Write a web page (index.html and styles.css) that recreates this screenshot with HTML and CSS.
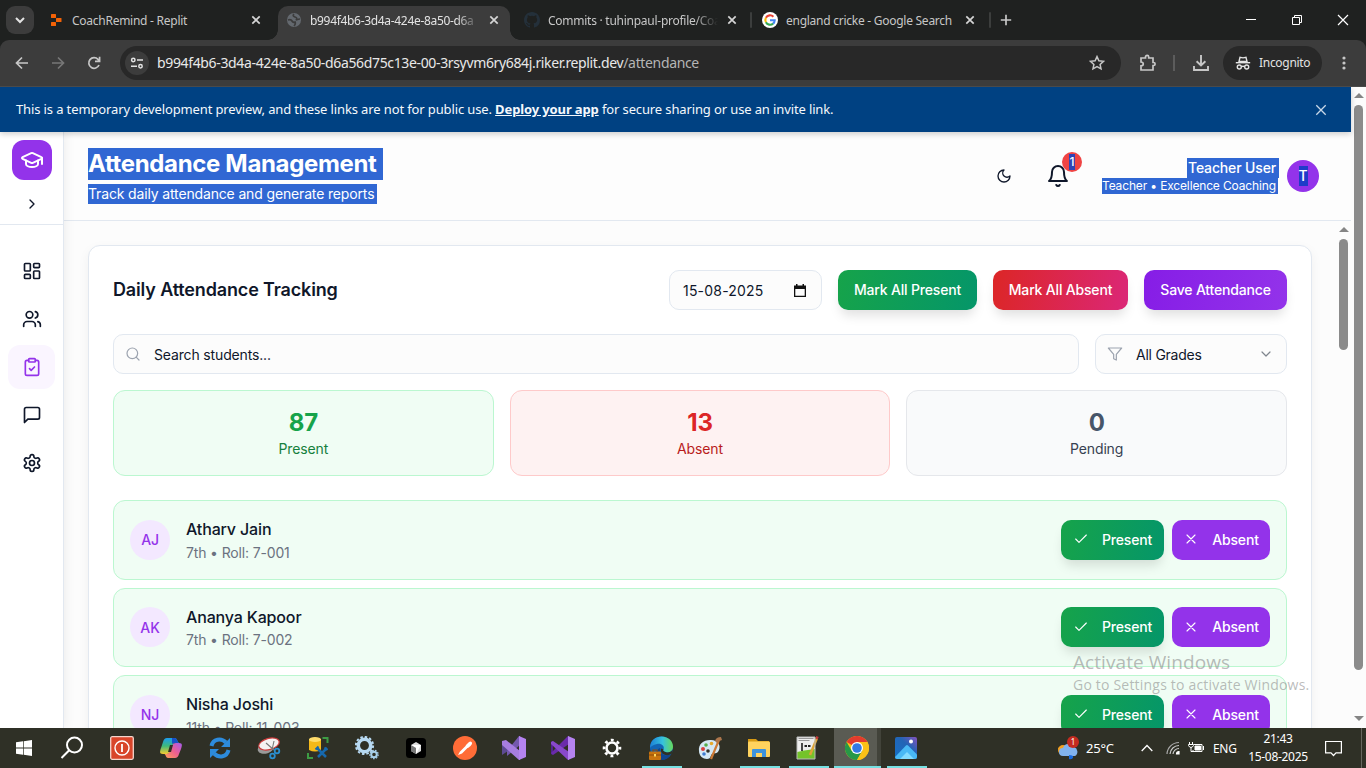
FILE: index.html
```html
<!DOCTYPE html>
<html lang="en">
<head>
<meta charset="utf-8">
<title>Attendance</title>
<link rel="stylesheet" href="styles.css">
</head>
<body>
<div class="tabs">
  <div class="tab-search"><svg width="28" height="28" viewBox="0 0 28 28" fill="none" stroke="#e3e3e3" stroke-width="2"><path d="M10 12l4 4 4-4"/></svg></div>
  <div class="tab tab-replit">
    <svg width="16" height="16" viewBox="0 0 16 16" fill="#f26207"><rect x="3" y="2" width="5" height="4" rx=".6"/><rect x="8" y="6" width="5.5" height="4" rx=".6"/><rect x="3" y="10" width="5" height="4" rx=".6"/></svg>
    <span class="tab-title t1">CoachRemind - Replit</span>
    <svg class="x" width="10" height="10" viewBox="0 0 10 10"><path d="M1.3 1.3l7.4 7.4M8.7 1.3L1.3 8.7"/></svg>
  </div>
  <div class="tab tab-active">
    <svg width="16" height="16" viewBox="0 0 16 16"><circle cx="8" cy="8" r="7" fill="#64696f"/><path d="M2 8q3-1 4 1t3 1q1 2-1 4M8 2q-2 2 1 3t1 3q3-1 4-1" fill="none" stroke="#3c3c3c" stroke-width="1.7"/></svg>
    <span class="tab-title t2">b994f4b6-3d4a-424e-8a50-d6a</span>
    <svg class="x" width="10" height="10" viewBox="0 0 10 10"><path d="M1.3 1.3l7.4 7.4M8.7 1.3L1.3 8.7"/></svg>
  </div>
  <div class="tab tab-github">
    <svg width="16" height="16" viewBox="0 0 16 16" fill="#24303a"><path fill-rule="evenodd" d="M8 0C3.58 0 0 3.58 0 8c0 3.54 2.29 6.53 5.47 7.59.4.07.55-.17.55-.38 0-.19-.01-.82-.01-1.49-2.01.37-2.53-.49-2.69-.94-.09-.23-.48-.94-.82-1.13-.28-.15-.68-.52-.01-.53.63-.01 1.08.58 1.23.82.72 1.21 1.87.87 2.33.66.07-.52.28-.87.51-1.07-1.78-.2-3.64-.89-3.64-3.95 0-.87.31-1.59.82-2.15-.08-.2-.36-1.02.08-2.12 0 0 .67-.21 2.2.82a7.4 7.4 0 0 1 4 0c1.53-1.04 2.2-.82 2.2-.82.44 1.1.16 1.92.08 2.12.51.56.82 1.27.82 2.15 0 3.07-1.87 3.75-3.65 3.95.29.25.54.73.54 1.48 0 1.07-.01 1.93-.01 2.2 0 .21.15.46.55.38A8 8 0 0 0 16 8c0-4.42-3.58-8-8-8z"/></svg>
    <span class="tab-title t3">Commits · tuhinpaul-profile/Coa</span>
    <svg class="x" width="10" height="10" viewBox="0 0 10 10"><path d="M1.3 1.3l7.4 7.4M8.7 1.3L1.3 8.7"/></svg>
  </div>
  <i class="tsep"></i>
  <div class="tab tab-google">
    <svg width="16" height="16" viewBox="0 0 16 16"><circle cx="8" cy="8" r="8" fill="#fff"/><g fill="none" stroke-width="2.1"><path d="M11.4 4.7A4.7 4.7 0 0 0 3.9 5.8" stroke="#ea4335"/><path d="M3.9 5.8a4.7 4.7 0 0 0 0 4.4" stroke="#fbbc05"/><path d="M3.9 10.2a4.7 4.7 0 0 0 7.2 1.4" stroke="#34a853"/><path d="M11.1 11.6A4.7 4.7 0 0 0 12.7 8.2H8" stroke="#4285f4"/></g></svg>
    <span class="tab-title t4">england cricke - Google Search</span>
    <svg class="x" width="10" height="10" viewBox="0 0 10 10"><path d="M1.3 1.3l7.4 7.4M8.7 1.3L1.3 8.7"/></svg>
  </div>
  <i class="tsep"></i>
  <svg class="plus" width="12" height="12" viewBox="0 0 12 12" stroke="#c7c7c7" stroke-width="1.7"><path d="M6 .8v10.4M.8 6h10.4"/></svg>
  <div class="wins">
    <svg width="12" height="12" viewBox="0 0 12 12" stroke="#fff"><path d="M1 5.500h10"/></svg>
    <svg width="12" height="12" viewBox="0 0 12 12" stroke="#fff" fill="none"><path d="M1.500 3.500h7v7h-7zM3.500 3.500v-2h7v7h-2"/></svg>
    <svg width="12" height="12" viewBox="0 0 12 12" stroke="#fff" stroke-width="1.2"><path d="M1 1l10 10M11 1L1 11"/></svg>
  </div>
</div>
<div class="toolbar">
  <div class="navs">
    <svg width="16" height="16" viewBox="0 0 16 16" fill="none" stroke="#c7c7c7" stroke-width="1.7"><path d="M14 8H3M8 2.500L2.500 8 8 13.500"/></svg>
    <svg width="16" height="16" viewBox="0 0 16 16" fill="none" stroke="#777" stroke-width="1.7"><path d="M2 8h11M8 2.500L13.500 8 8 13.500"/></svg>
    <svg width="16" height="16" viewBox="0 0 16 16" fill="none" stroke="#c7c7c7" stroke-width="1.7"><path d="M13 10a5.300 5.300 0 1 1-1-5.600L13.500 6M13.600 1.800V6.300H9"/></svg>
  </div>
  <div class="omni">
    <div class="chip"><svg width="14" height="14" viewBox="0 0 14 14" fill="none" stroke="#e3e3e3" stroke-width="1.500"><circle cx="3.300" cy="4" r="1.700"/><path d="M7 4h6M1 10.200h6"/><circle cx="10.500" cy="10.200" r="1.700"/></svg></div>
    <span class="url">b994f4b6-3d4a-424e-8a50-d6a56d75c13e-00-3rsyvm6ry684j.riker.replit.dev<em>/attendance</em></span>
    <svg class="star" width="16" height="16" viewBox="0 0 16 16" fill="none" stroke="#c7c7c7" stroke-width="1.500"><path d="M8 1.600l1.900 4.200 4.600.5-3.400 3.100.9 4.500L8 11.600l-4 2.300.9-4.500L1.500 6.300l4.600-.5z"/></svg>
  </div>
  <svg class="ext" width="18" height="18" viewBox="0 0 18 18" fill="none" stroke="#c7c7c7" stroke-width="1.700"><path d="M2 4h4.500V3a1.600 1.600 0 0 1 3.200 0v1H14v4.500h.6a1.500 1.500 0 0 1 0 3H14V16H2v-4.200c3 0 3-3.800 0-3.800z"/></svg>
  <i class="bsep"></i>
  <svg class="dl" width="18" height="18" viewBox="0 0 18 18" fill="none" stroke="#c7c7c7" stroke-width="1.900"><path d="M9 1v10M4.600 7.200L9 11.500l4.400-4.300M2 12v4h14v-4"/></svg>
  <div class="incog">
    <svg width="16" height="16" viewBox="0 0 16 16" fill="none" stroke="#e3e3e3" stroke-width="1.400"><path d="M4 6.500l1-4.200 3 .6 3-.6 1 4.200z"/><path d="M.8 7.700h14.400"/><circle cx="4.300" cy="12" r="2"/><circle cx="11.700" cy="12" r="2"/><path d="M6.300 11.700q1.700-1 3.400 0"/></svg>
    <span>Incognito</span>
  </div>
  <svg class="dots" width="4" height="16" viewBox="0 0 4 16" fill="#c7c7c7"><circle cx="2" cy="3" r="1.600"/><circle cx="2" cy="8" r="1.600"/><circle cx="2" cy="13" r="1.600"/></svg>
</div>
<div class="view">
  <div class="page">
    <div class="banner"><span class="btext">This is a temporary development preview, and these links are not for public use. <b>Deploy your app</b> for secure sharing or use an invite link.</span>
      <svg width="12" height="12" viewBox="0 0 12 12" stroke="#c9d8e8" stroke-width="1.300"><path d="M1.300 1.300l9.400 9.400M10.700 1.300L1.300 10.700"/></svg></div>
    <div class="app">
      <aside class="side">
        <div class="brand">
          <div class="logo"><svg class="lu" width="24" height="24" viewBox="0 0 24 24"><path d="M21.420 10.922a1 1 0 0 0-.019-1.838L12.830 5.180a2 2 0 0 0-1.660 0L2.600 9.080a1 1 0 0 0 0 1.832l8.570 3.908a2 2 0 0 0 1.660 0z"/><path d="M22 10v6"/><path d="M6 12.500V16a6 3 0 0 0 12 0v-3.500"/></svg></div>
          <svg class="lu chev" width="16" height="16" viewBox="0 0 24 24"><path d="m9 18 6-6-6-6"/></svg>
        </div>
        <nav>
          <a><svg class="lu" width="20" height="20" viewBox="0 0 24 24"><rect width="7" height="9" x="3" y="3" rx="1"/><rect width="7" height="5" x="14" y="3" rx="1"/><rect width="7" height="9" x="14" y="12" rx="1"/><rect width="7" height="5" x="3" y="16" rx="1"/></svg></a>
          <a><svg class="lu" width="20" height="20" viewBox="0 0 24 24"><path d="M16 21v-2a4 4 0 0 0-4-4H6a4 4 0 0 0-4 4v2"/><circle cx="9" cy="7" r="4"/><path d="M22 21v-2a4 4 0 0 0-3-3.870M16 3.130a4 4 0 0 1 0 7.750"/></svg></a>
          <a class="on"><svg class="lu" width="20" height="20" viewBox="0 0 24 24"><rect width="8" height="4" x="8" y="2" rx="1"/><path d="M16 4h2a2 2 0 0 1 2 2v14a2 2 0 0 1-2 2H6a2 2 0 0 1-2-2V6a2 2 0 0 1 2-2h2M9 14l2 2 4-4"/></svg></a>
          <a><svg class="lu" width="20" height="20" viewBox="0 0 24 24"><path d="M21 15a2 2 0 0 1-2 2H7l-4 4V5a2 2 0 0 1 2-2h14a2 2 0 0 1 2 2z"/></svg></a>
          <a><svg class="lu" width="20" height="20" viewBox="0 0 24 24"><path d="M12.220 2h-.44a2 2 0 0 0-2 2v.18a2 2 0 0 1-1 1.730l-.43.25a2 2 0 0 1-2 0l-.15-.08a2 2 0 0 0-2.730.73l-.22.38a2 2 0 0 0 .73 2.730l.15.1a2 2 0 0 1 1 1.720v.51a2 2 0 0 1-1 1.740l-.15.090a2 2 0 0 0-.73 2.730l.22.380a2 2 0 0 0 2.730.730l.15-.080a2 2 0 0 1 2 0l.43.250a2 2 0 0 1 1 1.730V20a2 2 0 0 0 2 2h.44a2 2 0 0 0 2-2v-.18a2 2 0 0 1 1-1.730l.43-.25a2 2 0 0 1 2 0l.15.080a2 2 0 0 0 2.730-.730l.22-.390a2 2 0 0 0-.73-2.730l-.15-.080a2 2 0 0 1-1-1.740v-.5a2 2 0 0 1 1-1.740l.15-.090a2 2 0 0 0 .73-2.730l-.22-.380a2 2 0 0 0-2.730-.730l-.15.080a2 2 0 0 1-2 0l-.43-.250a2 2 0 0 1-1-1.730V4a2 2 0 0 0-2-2z"/><circle cx="12" cy="12" r="3"/></svg></a>
        </nav>
      </aside>
      <main>
        <header>
          <div class="heads"><h1>Attendance Management</h1><p>Track daily attendance and generate reports</p></div>
          <svg class="lu moon" width="16" height="16" viewBox="0 0 24 24"><path d="M12 3a6 6 0 0 0 9 9 9 9 0 1 1-9-9Z"/></svg>
          <div class="bell"><svg class="lu" width="24" height="24" viewBox="0 0 24 24"><path d="M6 8a6 6 0 0 1 12 0c0 7 3 9 3 9H3s3-2 3-9M10.300 21a1.940 1.940 0 0 0 3.400 0"/></svg><span class="badge"><i>1</i></span></div>
          <div class="user"><span class="un">Teacher User</span><span class="ur">Teacher • Excellence Coaching</span></div>
          <div class="ava"><i>T</i></div>
        </header>
        <div class="scroll">
          <div class="content">
            <section class="card">
              <div class="bar">
                <h2>Daily Attendance Tracking</h2>
                <div class="date"><span>15-08-2025</span><svg width="12" height="13" viewBox="0 0 12 13"><path d="M0 1.500h2V0h1.500v1.500h5V0H10v1.500h2V13H0zM1.300 5v6.700h9.400V5z" fill="#111" fill-rule="evenodd"/></svg></div>
                <button class="btn g w1">Mark All Present</button>
                <button class="btn r w2">Mark All Absent</button>
                <button class="btn v w3">Save Attendance</button>
              </div>
              <div class="filters">
                <div class="field search"><svg class="lu" width="16" height="16" viewBox="0 0 24 24"><circle cx="11" cy="11" r="8"/><path d="m21 21-4.300-4.300"/></svg><span>Search students...</span></div>
                <div class="field grade"><svg class="lu" width="16" height="16" viewBox="0 0 24 24"><path d="M22 3H2l8 9.460V19l4 2v-8.540z"/></svg><span>All Grades</span><svg class="lu dn" width="16" height="16" viewBox="0 0 24 24"><path d="m6 9 6 6 6-6"/></svg></div>
              </div>
              <div class="stats">
                <div class="stat sg"><strong>87</strong><span>Present</span></div>
                <div class="stat sr"><strong>13</strong><span>Absent</span></div>
                <div class="stat ss"><strong>0</strong><span>Pending</span></div>
              </div>
              <div class="rows">
                <div class="row"><div class="ini">AJ</div><div class="who"><b>Atharv Jain</b><span>7th • Roll: 7-001</span></div>
                  <button class="btn g pr"><svg class="lu" width="16" height="16" viewBox="0 0 24 24"><path d="M20 6 9 17l-5-5"/></svg>Present</button><button class="btn ab"><svg class="lu" width="16" height="16" viewBox="0 0 24 24"><path d="M18 6 6 18M6 6l12 12"/></svg>Absent</button></div>
                <div class="row"><div class="ini">AK</div><div class="who"><b>Ananya Kapoor</b><span>7th • Roll: 7-002</span></div>
                  <button class="btn g pr"><svg class="lu" width="16" height="16" viewBox="0 0 24 24"><path d="M20 6 9 17l-5-5"/></svg>Present</button><button class="btn ab"><svg class="lu" width="16" height="16" viewBox="0 0 24 24"><path d="M18 6 6 18M6 6l12 12"/></svg>Absent</button></div>
                <div class="row"><div class="ini">NJ</div><div class="who"><b>Nisha Joshi</b><span>11th • Roll: 11-003</span></div>
                  <button class="btn g pr"><svg class="lu" width="16" height="16" viewBox="0 0 24 24"><path d="M20 6 9 17l-5-5"/></svg>Present</button><button class="btn ab"><svg class="lu" width="16" height="16" viewBox="0 0 24 24"><path d="M18 6 6 18M6 6l12 12"/></svg>Absent</button></div>
              </div>
            </section>
          </div>
          <div class="sb"><i class="up"></i><i class="thumb t-in"></i></div>
        </div>
      </main>
    </div>
  </div>
  <div class="sb"><i class="up"></i><i class="thumb t-out"></i><i class="down"></i></div>
</div>
<div class="watermark"><div class="w-a">Activate Windows</div><div class="w-b">Go to Settings to activate Windows.</div></div>
<footer class="taskbar">
  <div class="apps">
    <div class="slot first"><svg width="16" height="16" viewBox="0 0 16 16" fill="#fff"><path d="M0 2.300L7 1.300v6.300H0zM7.700 1.200L16 0v7.600H7.700zM0 8.400h7v6.300l-7-1zM7.700 8.400H16V16l-8.300-1.200z"/></svg></div>
    <div class="slot find"><svg width="24" height="24" viewBox="0 0 24 24" fill="none" stroke="#fff" stroke-width="2"><circle cx="14.500" cy="9" r="7.500"/><path d="M9.200 14.300L1.500 22"/></svg></div>
    <div class="slot"><svg width="24" height="24" viewBox="0 0 24 24"><rect x=".7" y=".7" width="22.600" height="22.600" rx="1.500" fill="#d8452a" stroke="#f5d5cc" stroke-width="1.300"/><circle cx="12" cy="12" r="7" fill="none" stroke="#fff" stroke-width="1.400"/><path d="M12 8v8" stroke="#fff" stroke-width="1.800"/></svg></div>
    <div class="slot"><svg width="24" height="24" viewBox="0 0 24 24"><defs><linearGradient id="ca" x1="0" y1="0" x2="0" y2="1"><stop stop-color="#1c9cf0"/><stop offset=".5" stop-color="#3eba7a"/><stop offset="1" stop-color="#f8cb30"/></linearGradient><linearGradient id="cb" x1="1" y1="0" x2="0" y2="1"><stop stop-color="#a45cf0"/><stop offset=".5" stop-color="#ee5f90"/><stop offset="1" stop-color="#ffa055"/></linearGradient></defs><path d="M8 2h8c2 0 2.500 4 4 5h-4q-2 0-3 3l-2 6q-.5 2-3 2H4c-4 0-3-3-2-6l2-6q1-4 4-4z" fill="url(#ca)"/><path d="M13 2h3c2 0 2.500 4 4 5h-4q-2 0-3 1z" fill="#1850c8"/><path d="M16 22H9c-2 0-2-3-3.500-4H8q2 0 3-3l2-5q1-3 4-3h3c4 0 3 3 2 6l-2 5q-1 4-4 4z" fill="url(#cb)"/><path d="M11 9h3l-2 7H9z" fill="#2f3026"/></svg></div>
    <div class="slot"><svg width="24" height="24" viewBox="0 0 24 24" fill="none" stroke="#2d8bdc" stroke-width="4"><path d="M3.500 10C5 3 13 1.500 18 6.500M20.500 14C19 21 11 22.500 6 17.500"/><path d="M22 2v9h-9zM2 22v-9h9z" fill="#2d8bdc" stroke="none"/></svg></div>
    <div class="slot"><svg width="24" height="24" viewBox="0 0 24 24"><ellipse cx="9" cy="12" rx="8.500" ry="5.500" transform="rotate(-18 9 12)" fill="#999"/><ellipse cx="12" cy="8" rx="10.500" ry="5.600" transform="rotate(-15 12 8)" fill="#f6f2f2" stroke="#cc3a3a" stroke-width="1.200"/><path d="M9 7l8 7M17 5l-2 9" stroke="#777" stroke-width="1.100"/><g fill="none" stroke="#2a8ed0" stroke-width="1.800"><circle cx="20" cy="15" r="2.300"/><circle cx="15.500" cy="20" r="2.300"/></g></svg></div>
    <div class="slot"><svg width="24" height="24" viewBox="0 0 24 24"><path d="M3 3v11q6 3 12 0V3z" fill="#f5b919"/><ellipse cx="9" cy="3.500" rx="6" ry="2.500" fill="#ffdc6b"/><path d="M16.500 2h5v5M2 17v5h5" fill="none" stroke="#3d9b44" stroke-width="2"/><path d="M11 12l9 9M21 12l-9 9" stroke="#1769ae" stroke-width="2.500"/><path d="M9.500 13.500l3-3M18.500 11.500l3 2.500" stroke="#1769ae" stroke-width="2"/></svg></div>
    <div class="slot"><svg width="24" height="24" viewBox="0 0 24 24" fill="none"><circle cx="9.500" cy="9.500" r="6.200" stroke="#b7d9f2" stroke-width="3.500"/><circle cx="9.500" cy="9.500" r="8.600" stroke="#b7d9f2" stroke-width="2" stroke-dasharray="2.500 2"/><circle cx="19" cy="18.500" r="2.800" stroke="#a7cfe9" stroke-width="2"/><circle cx="19" cy="18.500" r="4.200" stroke="#a7cfe9" stroke-width="1.200" stroke-dasharray="1.600 1.300"/></svg></div>
    <div class="slot"><svg width="20" height="20" viewBox="0 0 20 20"><rect width="20" height="20" rx="3.500" fill="#000"/><path d="M10 4l5 3v6l-5 3-5-3V7z" fill="#ddd"/><path d="M5 7h10l-5 9v-6z" fill="#fff"/><path d="M5 7l5 3v6l-5-3z" fill="#777"/></svg></div>
    <div class="slot"><svg width="24" height="24" viewBox="0 0 24 24"><circle cx="12" cy="12" r="12" fill="#ff6c37"/><path d="M5 19l2-3.500 6-6 2 2-6 6zM12.500 9.500l2-2q2.500-3 4-1.500t-1 4l-2.500 2z" fill="#fff"/></svg></div>
    <div class="slot"><svg width="24" height="24" viewBox="0 0 24 24"><path d="M0 5l6 5v5l-6 4z" fill="#5d4a92"/><path d="M5 15L17 0h1v9L5 20z" fill="#7458ad"/><path d="M0 5l4-1 14 11v9h-1L0 9z" fill="#a77de0"/><path d="M17 0l7 3v18l-7 3z" fill="#b583f0"/></svg></div>
    <div class="slot"><svg width="24" height="24" viewBox="0 0 24 24"><path d="M0 6l2-1v14l-2-1z" fill="#52218f"/><path d="M2 19L18 8V0h-1L0 17z" fill="#6a2bab"/><path d="M0 6l2-1 16 11v8h-1L0 8z" fill="#8848cb"/><path d="M17 0l7 3v18l-7 3z" fill="#b583f0"/></svg></div>
    <div class="slot"><svg width="20" height="20" viewBox="0 0 20 20" fill="none" stroke="#fff"><circle cx="10" cy="10" r="5.500" stroke-width="2.600"/><circle cx="10" cy="10" r="8" stroke-width="2.600" stroke-dasharray="2.900 3.383" stroke-dashoffset="1.450"/></svg></div>
    <div class="slot run"><svg width="24" height="24" viewBox="0 0 24 24"><defs><linearGradient id="eg" x1="0" x2="1"><stop stop-color="#1c7fd8"/><stop offset=".55" stop-color="#36c2dd"/><stop offset="1" stop-color="#67d95a"/></linearGradient></defs><circle cx="12.500" cy="12" r="11.500" fill="#1264b5"/><path d="M1 12C1 4 7 .5 12.500.5 20 .5 24 6 24 10.500c0 4-3 6-6 6s-5-1.500-3.500-3C16 10 12 7 8 8s-6 2-7 4z" fill="url(#eg)"/><path d="M11 12q-1 5 4 7 4 1 7-1-3 6-9 6-5-2-5-7 0-4 3-5z" fill="#10468f"/><path d="M14.500 13.500q-1.500 1.500 3.500 3 4 0 6-3l-1 4q-4 3-8 1-4-2-3-6z" fill="#2f3026"/><rect x="0" y="15.500" width="12" height="8.500" rx="1" fill="#c8740f"/><path d="M4 15.500v-1.500h4v1.500" fill="none" stroke="#8b4a0a" stroke-width="1.200"/><path d="M0 19h12" stroke="#8b4a0a"/><rect x="5" y="18" width="2" height="2.500" fill="#ffd75a"/></svg></div>
    <div class="slot"><svg width="24" height="24" viewBox="0 0 24 24"><path d="M1 15C0 8 6 3.500 13 4s10 5 8 10-5 2-7 4-1 5-5 5-8-3-8-8z" fill="#d5e8f5"/><circle cx="5" cy="13" r="2" fill="#d84040"/><circle cx="8" cy="9" r="1.800" fill="#57ad4c"/><circle cx="13.500" cy="7.500" r="1.800" fill="#e6a92c"/><circle cx="6" cy="18" r="1.800" fill="#417dd2"/><circle cx="10" cy="15" r="1.800" fill="#30302a"/><path d="M21 4l-8 19" stroke="#cc7a37" stroke-width="2.200"/><path d="M17 5q1-4 6-4l1 3q-4 1-5 3z" fill="#ad764c"/></svg></div>
    <div class="slot run"><svg width="24" height="24" viewBox="0 0 24 24"><path d="M1 3h8l2 2h11v3H1z" fill="#d79a13"/><rect x="1" y="5.500" width="22" height="15.500" rx="1" fill="#ffd35e"/><path d="M5 21v-7q0-1 1-1h12q1 0 1 1v7h-4v-4H9v4z" fill="#3d93dc"/></svg></div>
    <div class="slot run"><svg width="24" height="24" viewBox="0 0 24 24"><path d="M1 1h18v22H1z" fill="#eee"/><path d="M1 16q9-2 18-3v10H1z" fill="#74c32a"/><path d="M2.500 2.500h15M2.500 4.500h11" stroke="#999"/><path d="M6 7v8" stroke="#111" stroke-width="1.500"/><path d="M8.500 10h2.500M12 10h2.500" stroke="#222" stroke-width="2"/><path d="M21 2l-7 17" stroke="#dea638" stroke-width="2.500"/><path d="M20.500 3l1-2.500" stroke="#c43b3b" stroke-width="2.500"/><path d="M1 1h18v22H1z" fill="none" stroke="#bbb"/></svg></div>
    <div class="slot run cur"><svg width="24" height="24" viewBox="0 0 24 24"><circle cx="12" cy="12" r="12" fill="#fbc116"/><path d="M12 12L1.600 6A12 12 0 0 1 22.400 6H12z" fill="#e33b2e"/><path d="M1.600 6A12 12 0 0 0 12 24l5.200-9H6.800z" fill="#279847"/><path d="M12 6h10.400A12 12 0 0 1 12 24l5.200-9z" fill="#fbc116"/><circle cx="12" cy="12" r="6" fill="#fff"/><circle cx="12" cy="12" r="4.800" fill="#3379e4"/></svg></div>
    <div class="slot run"><svg width="22" height="22" viewBox="0 0 22 22"><defs><linearGradient id="ph" x1="0" y1="1" x2="1" y2="0"><stop stop-color="#1470c6"/><stop offset=".6" stop-color="#2364b5"/><stop offset="1" stop-color="#8652bd"/></linearGradient></defs><rect width="22" height="22" rx="2" fill="url(#ph)"/><path d="M0 20L11 8.500q1-1 2 0l9 9V20q0 2-2 2H2q-2 0-2-2z" fill="#49b9f5"/><path d="M5 22l7-7 7 7z" fill="#83dcff"/><circle cx="16" cy="4.500" r="2" fill="#fff"/></svg></div>
  </div>
  <div class="tray">
    <svg class="wx" width="24" height="24" viewBox="0 0 24 24"><path d="M1 12l4-2 2 5-4 2z" fill="#f2a020"/><circle cx="6" cy="14" r="5" fill="#f2a020"/><path d="M6 20a4 4 0 0 1 0-8 6 6 0 0 1 11-1 5 5 0 0 1 1 9z" fill="#82b3ee"/><path d="M12 19q5 0 4 3-2 2-4 1z" fill="#1769e0"/><circle cx="16" cy="6" r="6" fill="#c52b20"/><text x="16" y="9" font-size="8" fill="#fff" text-anchor="middle">1</text></svg>
    <span class="temp">25°C</span>
    <svg class="tc" width="12" height="8" viewBox="0 0 12 8" fill="none" stroke="#fff" stroke-width="1.300"><path d="M.7 7L6 1.500 11.300 7"/></svg>
    <svg class="wifi" width="14" height="14" viewBox="0 0 14 14" fill="none" stroke="#aaa" stroke-width="1.200"><path d="M1 13A12 12 0 0 1 13 1.500"/><path d="M4 13a9 9 0 0 1 9-8.500M7 13a6 6 0 0 1 6-5.500" stroke="#ccc"/><path d="M10.500 13a2.500 2.500 0 0 1 2.500-2.500v2.500z" fill="#fff" stroke="#fff"/></svg>
    <svg class="bat" width="16" height="12" viewBox="0 0 16 12" fill="none" stroke="#fff"><path d="M6 2.500h8v7h-9V8"/><path d="M7 4h5.500v4H7z" fill="#fff"/><path d="M15.500 4v4M1.500 0v2M4.500 0v2M.5 2.500h5v1q-1 2-2.500 2T.5 3.500zM3 5.500v4h2"/></svg>
    <span class="eng">ENG</span>
    <div class="clock"><span>21:43</span><span class="cd">15-08-2025</span></div>
    <svg class="note" width="17" height="17" viewBox="0 0 17 17" fill="none" stroke="#fff" stroke-width="1.200"><path d="M.6 1.500h15.800v11.300h-5.400L8.500 15.500 6 12.800H.6z"/></svg>
    <i class="show"></i>
  </div>
</footer>
</body>
</html>
```
FILE: styles.css
```css
*{box-sizing:border-box}
body{margin:0;width:1366px;height:768px;overflow:hidden;display:flex;flex-direction:column;font-family:Inter,"Liberation Sans",sans-serif;color:#0f172a;background:#1f2120;position:relative}
svg{display:block;flex:none}
i,em{font-style:normal}
.lu{fill:none;stroke:currentColor;stroke-width:2;stroke-linecap:round;stroke-linejoin:round}
.tabs{height:40px;display:flex;align-items:center;padding-left:6px;flex:none;font-family:"Noto Sans","Open Sans",sans-serif;font-size:12px;color:#c7c7c7}
.tab-search{width:28px;height:28px;border-radius:9px;background:#3c3c3c}
.tab{display:flex;align-items:center;height:34px;flex:none;margin-top:6px;padding-bottom:6px}
.tab-title{white-space:nowrap;margin-left:8px;line-height:18px;margin-top:1px;letter-spacing:-.26px}
.tab .x{margin-left:auto;stroke:#d5d5d5;stroke-width:1.7}
.tab-replit{width:244px;padding-left:14px;padding-right:17px}
.tab-active{width:232px;background:#3c3c3c;border-radius:10px 10px 0 0;padding-left:8px;padding-right:11px;color:#e3e3e3;position:relative}
.tab-active::before,.tab-active::after{content:"";position:absolute;bottom:0;width:10px;height:10px}
.tab-active::before{left:-10px;background:radial-gradient(circle at 0 0,transparent 9.5px,#3c3c3c 10px)}
.tab-active::after{right:-10px;background:radial-gradient(circle at 100% 0,transparent 9.5px,#3c3c3c 10px)}
.tab-github{width:240px;padding-left:14px;padding-right:13px}
.tab-google{width:237px;padding-left:10px;padding-right:14px}
.t2,.t3{width:170px;-webkit-mask:linear-gradient(90deg,#000 86%,transparent 100%);mask:linear-gradient(90deg,#000 86%,transparent 100%)}
.t2{letter-spacing:-.32px}
.tsep{width:2px;height:16px;background:#3c3e3d;border-radius:1px;flex:none}
.plus{margin-left:9px}
.wins{display:flex;gap:34px;margin-left:auto;margin-right:17px}
.toolbar{height:47px;background:#3c3c3c;border-radius:9px 9px 0 0;border-bottom:1px solid #4a4a4a;display:flex;align-items:center;flex:none;font-family:"Noto Sans","Open Sans",sans-serif;color:#e3e3e3}
.navs{display:flex;gap:20px;padding-left:14px}
.omni{margin-left:18px;width:1001px;height:34px;border-radius:17px;background:#282828;display:flex;align-items:center;padding:0 16px 0 5px}
.chip{width:24px;height:24px;border-radius:50%;background:#3c3c3c;display:flex;align-items:center;justify-content:center}
.url{margin-left:8px;font-size:14px;letter-spacing:-.35px;color:#e8e8e8;white-space:nowrap;padding-bottom:1px}
.url em{color:#b5b5b5}
.star{margin-left:auto}
.ext{margin-left:18px}
.bsep{width:2px;height:16px;background:#5c5c5c;margin-left:16px}
.dl{margin-left:17px}
.incog{margin-left:13px;width:99px;height:34px;border-radius:17px;background:#282828;display:flex;align-items:center;padding-left:12px;gap:8px;font-size:12px;letter-spacing:-.35px}
.incog span{padding-bottom:1px;letter-spacing:-.3px}
.dots{margin-left:20px}
.view{height:641px;display:flex;flex:none;overflow:hidden;background:#fcfcfc}
.page{width:1351px;display:flex;flex-direction:column}
.banner{height:45px;background:#004182;color:#f4f8fc;display:flex;align-items:center;justify-content:space-between;padding:0 24px 0 16px;font:13px "Noto Sans","Open Sans",sans-serif;box-shadow:0 2px 6px rgba(0,0,0,.2);position:relative;z-index:3;flex:none}
.btext{white-space:nowrap;letter-spacing:-.125px;padding-bottom:1px}
.banner b{text-decoration:underline;font-weight:700}
.app{display:flex;height:596px}
.side{width:64px;flex:none;border-right:1px solid #e2e8f0;background:#fff;box-shadow:2px 0 10px rgba(0,0,0,.06);z-index:2}
.brand{height:93px;border-bottom:1px solid #e2e8f0;padding-top:8px;display:flex;flex-direction:column;align-items:center;gap:16px}
.logo{width:40px;height:40px;border-radius:12px;background:#9333ea;color:#fff;display:flex;align-items:center;justify-content:center}
nav{padding:24px 8px;display:flex;flex-direction:column;gap:4px}
nav a{height:44px;border-radius:12px;display:flex;align-items:center;justify-content:center}
nav a.on{background:#faf5ff;color:#9333ea}
main{flex:1;min-width:0;letter-spacing:-.15px}
header{height:89px;border-bottom:1px solid #e2e8f0;display:flex;align-items:center;padding:0 32px 0 24px;background:#fdfdfd;box-shadow:0 1px 3px rgba(0,0,0,.03)}
.heads{display:flex;flex-direction:column;align-items:flex-start;gap:4px;margin-right:auto}
h1,.heads p{margin:0;background:#3067d3;color:#fff;white-space:nowrap}
h1{font-size:24px;line-height:32px;font-weight:700;letter-spacing:-.34px;width:295px}
.heads p{font-size:14px;line-height:20px;width:289px}
.moon{margin-right:34px}
.bell{position:relative;margin-right:32px}
.badge{position:absolute;left:16px;top:-12px;width:20px;height:20px;border-radius:50%;background:#ef4444;color:#fff;font-size:12px;line-height:16px;font-weight:500;display:flex;align-items:center;justify-content:center}
.badge i{background:#2f44b6;padding:0 1px;height:16px}
.user{display:flex;flex-direction:column;align-items:flex-end;color:#fff;margin-right:8px;white-space:nowrap}
.un,.ur{background:#3067d3}
.un{font-size:14px;font-weight:500;line-height:20px;width:92px;padding-left:1px}
.ur{font-size:12px;line-height:16px;width:176px;margin-right:1px}
.ava{width:32px;height:32px;border-radius:50%;background:#9333ea;color:#fff;display:flex;align-items:center;justify-content:center;font-size:14px;font-weight:500}
.ava i{background:#1f3cc9;line-height:20px}
.scroll{display:flex;height:507px;overflow:hidden}
.content{flex:1;padding:24px 24px 0;min-width:0;background:#fcfcfc}
.card{background:#fff;border:1px solid #e2e8f0;border-radius:12px;padding:24px;height:600px;box-shadow:0 4px 12px rgba(0,0,0,.05)}
.bar{display:flex;height:40px;align-items:center;gap:16px}
h2{margin:0 auto 0 0;font-size:18px;line-height:28px;font-weight:600;white-space:nowrap}
.date{width:153px;height:40px;border:1px solid #e2e8f0;border-radius:10px;background:#fcfcfc;display:flex;align-items:center;justify-content:space-between;padding:0 15px 0 13px;font-size:14px;letter-spacing:.2px}
.btn{border:0;border-radius:10px;height:40px;color:#fff;font:500 14px Inter,sans-serif;letter-spacing:-.18px;padding:0 0 1px;display:flex;align-items:center;justify-content:center;flex:none;white-space:nowrap}
.g{background:linear-gradient(100deg,#16a34a,#059669);box-shadow:0 8px 12px -3px rgba(0,0,0,.13)}
.r{background:linear-gradient(100deg,#dc2626,#db2777);box-shadow:0 8px 12px -3px rgba(0,0,0,.13)}
.v{background:linear-gradient(100deg,#861de6,#9333ea);box-shadow:0 8px 12px -3px rgba(0,0,0,.13)}
.w1{width:139px}.w2{width:135px}.w3{width:143px}
.filters{margin-top:24px;display:flex;gap:16px}
.field{height:40px;border:1px solid #e2e8f0;border-radius:10px;background:#fcfcfc;display:flex;align-items:center;font-size:14px;padding:0 12px 0 11px;gap:13px}
.field svg{color:#9ca3af;stroke-width:1.8}
.search{flex:1}
.grade{width:192px;letter-spacing:-.25px}
.field .dn{margin-left:auto;color:#7f858e}
.stats{display:grid;grid-template-columns:repeat(3,1fr);gap:16px;margin-top:16px}
.stat{height:86px;border:1px solid;border-radius:12px;padding-top:16px;display:flex;flex-direction:column;align-items:center}
.stat strong{font-size:24px;line-height:32px;font-weight:700}
.stat span{font-size:14px;line-height:20px}
.sg{background:#f0fdf4;border-color:#bbf7d0;color:#16a34a}.sg span{color:#15803d}
.sr{background:#fef2f2;border-color:#fecaca;color:#dc2626}.sr span{color:#b91c1c}
.ss{background:#f9fafb;border-color:#e5e7eb;color:#475569}.ss span{color:#374151}
.rows{margin-top:24px;display:flex;flex-direction:column;gap:8px}
.row{height:79.5px;background:#f0fdf4;border:1px solid #bbf7d0;border-radius:12px;padding:0 16px;display:flex;align-items:center}
.ini{width:40px;height:40px;border-radius:50%;background:#f3e8ff;color:#9333ea;font-size:14px;font-weight:500;display:flex;align-items:center;justify-content:center;flex:none}
.who{margin:0 auto 0 16px;display:flex;flex-direction:column;gap:1.5px}
.who b{font-weight:500;font-size:16px;line-height:24px}
.who span{font-size:14px;line-height:20px;color:#6b7280}
.row .btn svg{margin-right:13px;stroke-width:1.7}
.pr{width:103px;margin-right:8px}
.ab{width:98px;background:#9333ea}
.sb{width:15px;flex:none;background:#fcfcfc;display:flex;flex-direction:column;align-items:center;padding-top:6px}
.up,.down{border:5px solid transparent;width:0;height:0}
.up{border-top:0;border-bottom:5px solid #858585}
.down{border-bottom:0;border-top:5px solid #858585;margin-top:46px}
.thumb{width:9px;border-radius:5px;background:#8b8b8b;margin-top:7px;flex:none}
.t-in{height:111px}.t-out{height:565px}
.watermark{position:absolute;left:1073px;top:650px;color:rgba(130,130,130,.55);font-family:"Open Sans","Noto Sans",sans-serif;white-space:nowrap;z-index:5}
.w-a{font-size:19px;line-height:25px;letter-spacing:.07px}
.w-b{font-size:14px;line-height:20px;letter-spacing:.2px}
.taskbar{height:40px;flex:none;background:#2f3026;display:flex;color:#fff;font-family:"Noto Sans","Open Sans",sans-serif;font-size:12px}
.apps{display:flex;width:932px}
.slot{width:49.03px;height:40px;flex:none;display:flex;align-items:center;justify-content:center;position:relative}
.slot.first{width:48px}
.slot.find{width:49.6px;padding-right:2px}
.run::after{content:"";position:absolute;left:5px;width:40px;bottom:0;height:2px;background:#76e0e2}
.cur{background:linear-gradient(90deg,transparent 1px,#5a5b53 1px 44px,#42433a 44px 48px,transparent 48px)}
.cur::after{left:1px;width:47px}
.tray{display:flex;align-items:center;flex:1;padding-left:125px}
.temp{width:29px;margin-left:5px;font-size:13px;letter-spacing:-.2px;white-space:nowrap}
.tc{margin-left:26px}
.wifi{margin-left:13px}
.bat{margin-left:8px}
.eng{margin-left:9px;width:24px;letter-spacing:-.3px}
.clock{margin-left:10px;width:62px;display:flex;flex-direction:column;align-items:center;line-height:18px;padding-bottom:1px;white-space:nowrap;letter-spacing:-.35px}
.cd{letter-spacing:-.3px}
.note{margin-left:16px}
.show{width:1px;height:40px;background:#66675f;margin-left:auto;margin-right:4px}
```
